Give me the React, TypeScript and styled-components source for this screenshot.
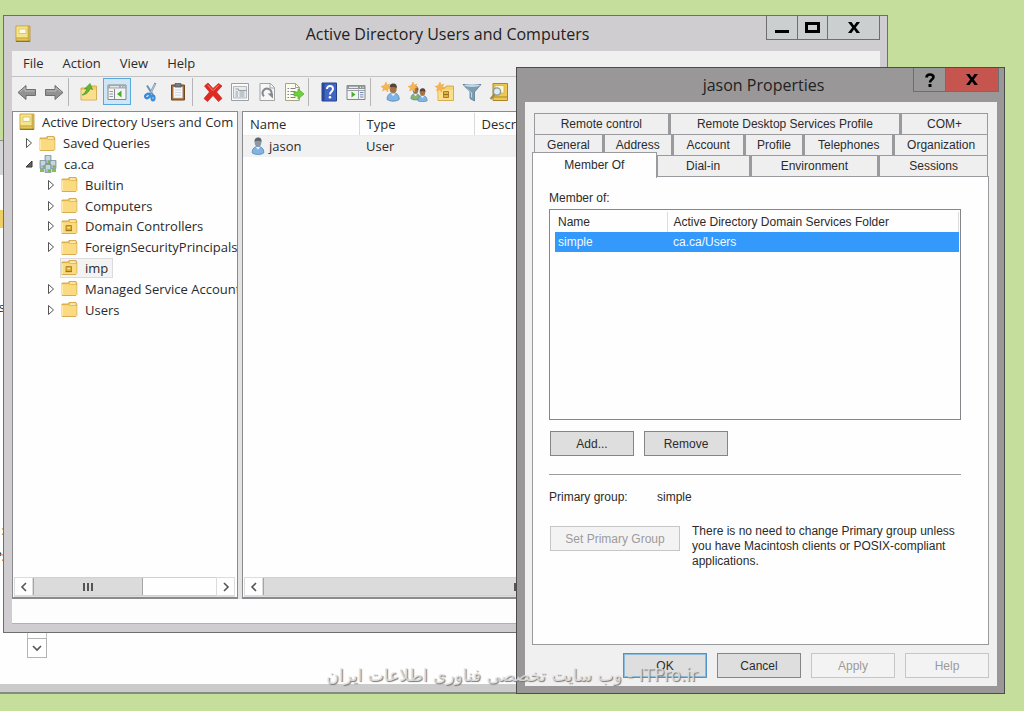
import React from "react";
import styled, { createGlobalStyle, css } from "styled-components";

const UI = `"Open Sans", "Noto Sans", sans-serif`;
const CLASSIC = `"Liberation Sans", Arial, sans-serif`;

const GlobalStyle = createGlobalStyle`
  *, *::before, *::after { box-sizing: border-box; }
  body { margin: 0; font-family: ${UI}; font-size: 13px; color: #2b2b2b; }
  button, input { font: inherit; color: inherit; }
  button { margin: 0; padding: 0; border: 0; background: none; }
  ul { margin: 0; padding: 0; list-style: none; }
  svg { display: block; flex: none; }
`;

const Desktop = styled.div`
  position: relative;
  height: 100vh;
  min-height: 640px;
  overflow: hidden;
  background: #c5de9b;
`;

/* ---------- window behind ---------- */

const BackWindow = styled.section`
  position: absolute;
  top: 140px;
  left: 0;
  right: 136px;
  bottom: 17px;
  display: flex;
  flex-direction: column;
  background: #fefefe;
  border-top: 1px solid #8c8c8c;
  border-bottom: 2px solid #848b80;
`;

const BackHeader = styled.div`
  height: 34px;
  background: #d5d5d5;
`;

const BackBody = styled.div`
  flex: 1;
  min-height: 0;
  display: flex;
  gap: 22px;
`;

const BackLabels = styled.div`
  width: 5px;
  display: flex;
  flex-direction: column;
  align-items: flex-end;
  padding-top: 35px;
  line-height: 20px;
`;

const BackFolder = styled.span`
  width: 5px;
  height: 18px;
  margin-bottom: 69px;
  background: #f0cf62;
`;

const BackLabel = styled.span<{ $after?: number }>`
  margin-bottom: ${(p) => p.$after ?? 0}px;
`;

const BackScroll = styled.div`
  display: flex;
  flex-direction: column;
  justify-content: flex-end;
  padding-bottom: 26px;
`;

const BackFooter = styled.div`
  height: 8px;
  background: #cccbcc;
`;

const ScrollDown = styled.button`
  display: grid;
  place-items: center;
  width: 20px;
  height: 20px;
  border: 1px solid #b4b4b4;
  background: #fff;
  color: #555;
`;

const ScrollTrack = styled.div`
  width: 20px;
  height: 40px;
  border: 1px solid #c4c4c4;
  border-bottom: 0;
`;

/* ---------- window chrome ---------- */

const MainWindow = styled.section`
  position: absolute;
  top: 15px;
  left: 3px;
  right: 136px;
  bottom: 78px;
  display: flex;
  flex-direction: column;
  padding: 0 7px 8px 8px;
  border: 1px solid #6e6e6e;
  background: #cfcdcf;
`;

const DialogWindow = styled.section`
  position: absolute;
  top: 67px;
  left: 516px;
  right: 19px;
  bottom: 17px;
  display: flex;
  flex-direction: column;
  padding: 0 5px 7px 8px;
  border: 1px solid #4c4c4c;
  background: #999798;
`;

const TitleBar = styled.header<{ $height: number }>`
  flex: none;
  display: grid;
  grid-template-columns: 1fr auto 1fr;
  align-items: center;
  height: ${(p) => p.$height}px;
  padding-left: 3px;
`;

const Title = styled.h1`
  margin: 0;
  font-size: 16px;
  font-weight: 400;
  line-height: 24px;
  color: #222;
`;

const Caption = styled.div`
  align-self: start;
  justify-self: end;
  display: flex;
  border: 1px solid #6e6e6e;
  border-top: 0;
`;

const CaptionButton = styled.button<{ $width: number; $tone?: "light" | "grey" | "red" }>`
  display: grid;
  place-items: center;
  width: ${(p) => p.$width}px;
  height: 23px;
  background: ${(p) => (p.$tone === "red" ? "#c65550" : p.$tone === "grey" ? "#989898" : "#cbcfd0")};
  & + & { border-left: 1px solid #6e6e6e; }
`;

/* ---------- main window ---------- */

const MenuBar = styled.nav`
  flex: none;
  display: flex;
  gap: 19px;
  height: 26px;
  padding: 0 11px;
  background: #f1f0f1;
  border-bottom: 1px solid #c2c2c2;
`;

const MenuItem = styled.button`
  height: 23px;
  line-height: 22px;
`;

const Toolbar = styled.div`
  flex: none;
  display: flex;
  gap: 1px;
  height: 34px;
  padding: 1px 2px 5px;
  background: #f1f0f1;
`;

const ToolButton = styled.button<{ $active?: boolean }>`
  display: grid;
  place-items: center;
  flex: none;
  width: 26px;
  height: 27px;
  ${(p) => p.$active && css`
    width: 28px;
    border: 1px solid #5aa7dc;
    background: #cfe6f6;
  `}
`;

const ToolDivider = styled.span<{ $blank?: boolean }>`
  flex: none;
  width: ${(p) => (p.$blank ? 5 : 7)}px;
  border-left: 1px solid ${(p) => (p.$blank ? "transparent" : "#b5b5b5")};
`;

const Panes = styled.div`
  flex: 1;
  min-height: 0;
  display: grid;
  grid-template-columns: 226px minmax(0, 1fr);
  gap: 4px;
  background: #e4e3e4;
`;

const Pane = styled.div`
  min-width: 0;
  display: flex;
  flex-direction: column;
  justify-content: space-between;
  overflow: hidden;
  border: 1px solid #8b8b8f;
  border-bottom-width: 2px;
  background: #fefefe;
`;

const StatusBar = styled.footer`
  flex: none;
  height: 25px;
  background: #fdfdfd;
  border-bottom: 1px solid #b0b0b0;
`;

const Tree = styled.ul`
  display: grid;
  grid-template-rows: repeat(10, 1fr);
  height: 208px;
`;

const TreeRow = styled.li<{ $level: number }>`
  display: flex;
  align-items: center;
  min-width: 0;
  padding-left: ${(p) => [0, 8, 30][p.$level]}px;
  white-space: nowrap;
`;

const Expander = styled.button`
  display: grid;
  place-items: center;
  flex: none;
  width: 15px;
  height: 16px;
  margin-right: 2px;
`;

const TreeLabel = styled.button<{ $root?: boolean; $selected?: boolean }>`
  display: flex;
  align-items: center;
  gap: 7px;
  height: 20px;
  padding: 0 4px 0 ${(p) => (p.$root ? 5 : 0)}px;
  line-height: 20px;
  border: 1px solid transparent;
  ${(p) => p.$selected && css`
    border-color: #dcdcdc;
    background: #f3f3f3;
  `}
`;

const ScrollBar = styled.div`
  flex: none;
  display: flex;
  height: 20px;
  margin: 0 2px 0 1px;
  border-bottom: 1px solid #dedede;
`;

const ScrollArrow = styled.button`
  display: grid;
  place-items: center;
  flex: none;
  width: 19px;
  border: 1px solid #dcdcdc;
  color: #555;
`;

const ScrollLane = styled.div`
  flex: 1;
  border: 1px solid #d0d0d0;
  border-width: 1px 0;
`;

const ScrollThumb = styled.div<{ $share: number }>`
  display: grid;
  place-items: center;
  width: ${(p) => p.$share}%;
  height: 100%;
  background: #dbdbdc;
  border: 1px solid #a5a5a5;
  border-width: 0 1px;
`;

const ObjectList = styled.table`
  width: 100%;
  margin-top: 1px;
  border-collapse: collapse;
  table-layout: fixed;
  th, td {
    height: 22px;
    padding: 0 0 0 7px;
    font-weight: 400;
    text-align: left;
    line-height: 20px;
    white-space: nowrap;
  }
  th { border-right: 1px solid #d9d9d9; border-bottom: 1px solid #ececec; }
  td { background: #f2f1f2; }
  th:first-child { width: 116px; }
  th:nth-child(2) { width: 115px; }
`;

const NameCell = styled.span`
  display: flex;
  align-items: center;
  gap: 3px;
`;

/* ---------- dialog ---------- */

const DialogBody = styled.div`
  flex: 1;
  min-height: 0;
  display: flex;
  flex-direction: column;
  margin-right: 2px;
  padding: 11px 8px 8px 7px;
  background: #f1f0f1;
  font-family: ${CLASSIC};
  font-size: 12px;
`;

const TabRows = styled.div`
  position: relative;
  z-index: 1;
  flex: none;
  padding: 0 1px 0 2px;
`;

const TabRow = styled.div<{ $cols: string }>`
  display: grid;
  grid-template-columns: ${(p) => p.$cols};
  height: 21px;
`;

const Tab = styled.button<{ $selected?: boolean }>`
  border: 1px solid #9a9a9e;
  border-right-width: 2px;
  border-bottom: 0;
  background: #f0eff0;
  line-height: 19px;
  &:last-child { border-right-width: 1px; }
  ${(p) => p.$selected && css`
    z-index: 1;
    margin: -3px 0 -2px -2px;
    border-right-width: 1px;
    background: #fefefe;
  `}
`;

const TabPanel = styled.div`
  flex: 1;
  min-height: 0;
  padding: 13px 27px 0 16px;
  border: 1px solid #9a9a9e;
  background: #fefefe;
`;

const FieldLabel = styled.div`
  line-height: 16px;
`;

const GroupBox = styled.div`
  height: 211px;
  margin: 3px 0 0;
  padding: 2px 1px 0 5px;
  border: 1px solid #85858a;
`;

const GroupTable = styled.table`
  width: 100%;
  border-collapse: collapse;
  table-layout: fixed;
  th, td {
    height: 20px;
    padding: 0 0 0 3px;
    font-weight: 400;
    text-align: left;
    line-height: 18px;
  }
  th + th, td + td { padding-left: 6px; }
  th { border-right: 1px solid #dcdcdc; }
  th:first-child { width: 112px; }
  td { background: #3399fb; color: #f2f8ff; }
`;

const ButtonRow = styled.div<{ $end?: boolean }>`
  flex: none;
  display: flex;
  gap: 10px;
  margin-top: ${(p) => (p.$end ? 8 : 11)}px;
  justify-content: ${(p) => (p.$end ? "flex-end" : "flex-start")};
  ${(p) => !p.$end && css`padding-left: 1px;`}
`;

const PushButton = styled.button<{ $primary?: boolean; $wide?: boolean }>`
  flex: none;
  width: ${(p) => (p.$wide ? 130 : 84)}px;
  height: 25px;
  border: 1px solid ${(p) => (p.$primary ? "#4f93c8" : "#858585")};
  background: #dfdedf;
  line-height: 22px;
  ${(p) => p.$primary && css`box-shadow: inset 0 0 0 1px #8ebbd9;`}
  &:disabled {
    border-color: #c6c6c6;
    background: #f4f3f4;
    color: #9b9b9b;
  }
`;

const Rule = styled.hr`
  margin: 18px 0 13px;
  border: 0;
  border-top: 1px solid #9c9c9c;
`;

const Primary = styled.dl`
  display: grid;
  grid-template-columns: 108px 1fr;
  margin: 0;
  line-height: 18px;
  dd { margin: 0; }
`;

const PrimaryHint = styled.div`
  display: flex;
  gap: 12px;
  margin-top: 18px;
  padding-left: 1px;
  p { margin: 0; line-height: 15px; }
  ${PushButton} { margin-top: 2px; }
`;

const Watermark = styled.p`
  position: absolute;
  left: 0;
  right: 0;
  bottom: 24px;
  margin: 0;
  text-align: center;
  font-family: "DejaVu Sans", sans-serif;
  font-size: 17px;
  line-height: 24px;
  color: rgba(225, 225, 225, 0.85);
  text-shadow: 1px 1px 1px #777;
  pointer-events: none;
`;

/* ---------- drawings ---------- */

const Chevron = ({ d }: { d: string }) => (
  <svg width="10" height="10" viewBox="0 0 10 10" fill="none" stroke="currentColor" strokeWidth="1.6"><path d={d} /></svg>
);
const LEFT = "M7 1 3 5l4 4";
const RIGHT = "M3 1l4 4-4 4";
const DOWN = "M1 3l4 4 4-4";

const Grip = () => (
  <svg width="10" height="8" viewBox="0 0 10 8" fill="#555"><path d="M0 0h2v8H0zM4 0h2v8H4zM8 0h2v8H8z" /></svg>
);

const ConsoleIcon = () => (
  <svg width="16" height="18" viewBox="0 0 16 18">
    <path d="M1 1h14v15.5H1z" fill="#e3c653" stroke="#b8963a" strokeWidth=".8" />
    <path d="M1.500 1.500h11v11h-11z" fill="#f4e48f" />
    <path d="M4 4h7v4.500H4z" fill="#fffdea" stroke="#d8bd5c" strokeWidth=".8" />
    <path d="M1 13h14" stroke="#c9a83f" />
    <path d="M13.500 2v14" stroke="#cdae45" strokeWidth="1.4" />
    <path d="M1 16.300h14" stroke="#8c701e" strokeWidth="1.2" />
  </svg>
);

const FolderIcon = ({ ou }: { ou?: boolean }) => (
  <svg width="17" height="17" viewBox="0 0 17 17">
    <path d="M1 3h6l1-1.5h7l.8 1.5v11.5l-1 1H1z" fill="#e9bd55" stroke="#cf9f3d" strokeWidth=".8" />
    <path d="M9 2.3h5.6v1.5H9z" fill="#fff3c4" />
    <path d="M1 4.2h7L9 5h6.5v10H1z" fill="#fadb82" />
    <path d="M1.2 4.5v10.5" stroke="#fff0b8" />
    {ou && <g><path d="M5 7.500h5.500v5H5z" fill="#dcae38" stroke="#a37c1c" strokeWidth=".8" /><path d="M6.500 9h2.500v1.200H6.500z" fill="#ffeaa0" /><path d="M4.500 12.700h6.500" stroke="#8f6a14" strokeWidth=".8" /></g>}
  </svg>
);

const DomainIcon = () => (
  <svg width="18" height="18" viewBox="0 0 18 18">
    <path d="M9 4v5M4 9h10" stroke="#8aa0a8" />
    {[[6, 0], [1, 5], [11, 5], [6, 9]].map(([x, y]) => (
      <g key={`${x}-${y}`}>
        <path d={`M${x} ${y + 0.5}h6v8h-6z`} fill="#a9bec6" stroke="#748a94" strokeWidth=".7" />
        <path d={`M${x + 1} ${y + 2}h4M${x + 1} ${y + 4}h4`} stroke="#e3eef1" />
        <path d={`M${x + 3} ${y + 5.6}h2.5v2h-2.5z`} fill="#74b63c" />
      </g>
    ))}
    <path d="M1 14h4v3H1zM13 14h4v3h-4z" fill="#86bf58" />
  </svg>
);

const Person = ({ x = 0, y = 0, s = 1, body = "#7fb4e3", head = "#a3744a", hair = "#5a4535" }) => (
  <g transform={`translate(${x} ${y}) scale(${s})`}>
    <path d="M1 15c0-4 2-6 5.5-6S12 11 12 15c-3 2-8 2-11 0z" fill={body} stroke="#4b7fb2" strokeWidth=".7" />
    <path d="M4.500 9.500 6.500 12l2-2.500z" fill="#e9f2fb" />
    <ellipse cx="6.500" cy="5" rx="3.200" ry="4.200" fill={head} />
    <path d="M3.200 4.500C3 1.500 5 .3 6.700.4 9 .5 10.200 2 9.800 4.600 8 3.500 5 3.200 3.200 4.500z" fill={hair} />
  </g>
);

const Spark = () => (
  <path d="M5 0l1 3 3-1-1.500 2.500L10 6 7 6.500 6.500 10 4.500 7.500 1.500 9l1-3L0 4.500 3.200 3.500z" fill="#f7b550" stroke="#e89a35" strokeWidth=".4" />
);

const T = ({ children }: { children: React.ReactNode }) => (
  <svg width="20" height="20" viewBox="0 0 20 20">{children}</svg>
);

const ArrowShape = ({ flip }: { flip?: boolean }) => (
  <T>
    <g transform={flip ? "matrix(-1 0 0 1 20 0)" : undefined}>
      <path d="M1 10.500 9 3.500v4h9.500v6H9v4z" fill="#929292" stroke="#6f6f6f" />
      <path d="M3 10 8 5.800V9h9.500" stroke="#bcbcbc" fill="none" />
    </g>
  </T>
);

const icons = {
  up: (
    <T>
      <path d="M2 6h7l1-2h7.500v14H2z" fill="#f3cf6d" stroke="#cf9f3d" strokeWidth=".8" />
      <path d="M2.500 8h14.500v9.500H2.500z" fill="#fbdf8d" />
      <path d="M3 13c2-1 4-3.500 5-6.500L5.500 7 11 1.500l2.500 6-2.300-1C10 10 7 13 3 13z" fill="#62b832" stroke="#3f8d1b" strokeWidth=".6" />
    </T>
  ),
  tree: (
    <T>
      <path d="M1 3h18v14.500H1z" fill="#f4f4f4" stroke="#84888c" />
      <path d="M1 3h18v3.500H1z" fill="#a2a9ae" />
      <path d="M3 4.800h9M14 4.800h1M16.500 4.800h1" stroke="#fff" />
      <path d="M7.500 7v10" stroke="#84888c" />
      <path d="M2.500 9.500h3.500M2.500 12h3.500M2.500 14.500h3.500" stroke="#9098a0" />
      <path d="M14.500 8.500v7L10 12z" fill="#47ad2b" />
    </T>
  ),
  cut: (
    <T>
      <path d="M14.500 1 8.500 13M6 3.500 12.500 14" stroke="#6d90b0" strokeWidth="2" />
      <path d="M14 2 9.500 11" stroke="#d7e6f2" strokeWidth=".7" />
      <ellipse cx="6.500" cy="14" rx="2.600" ry="1.800" fill="none" stroke="#3b8bdb" strokeWidth="2.200" transform="rotate(-35 6.500 14)" />
      <ellipse cx="12" cy="16" rx="1.500" ry="2.300" fill="none" stroke="#3b8bdb" strokeWidth="2.200" />
    </T>
  ),
  paste: (
    <T>
      <path d="M3.500 3h13v15h-13z" fill="#a66f3c" stroke="#744719" />
      <path d="M5.500 5h9v11h-9z" fill="#f6f8fa" stroke="#c0c4c8" strokeWidth=".6" />
      <path d="M7 1.500h6v3.500H7z" fill="#777d84" stroke="#4d5257" strokeWidth=".7" />
      <path d="M7 8h6M7 10.500h6M7 13h6" stroke="#c5ccd3" strokeWidth=".8" />
    </T>
  ),
  remove: <T><path d="M1.500 4 5 1l5 5.500L15.500 1.500 19 4l-5.500 6L19 16.500 15.500 19.500 10 13.500 4.500 19.500 1 16.500 6.500 10z" fill="#dd2b23" stroke="#c4231d" strokeWidth=".7" /><path d="M4.500 2.800 10 8.700l5.500-5.500" stroke="#f58a80" fill="none" /></T>,
  props: (
    <T>
      <path d="M1.500 1.500h17v17h-17z" fill="#fafafa" stroke="#9ba1a7" />
      <path d="M3.500 4.500h13v11.500h-13z" fill="#e9ecef" stroke="#a2a8ae" strokeWidth=".8" />
      <path d="M5.500 7h3v1.500h8M5.500 10h2.500M9.500 10h5M5.500 12h2.500M9.500 12h5M5.500 14h2.500M9.500 14h5" stroke="#999fa6" fill="none" />
    </T>
  ),
  refresh: (
    <T>
      <path d="M3 1.500h10.500l4 4v13H3z" fill="#f7f7f7" stroke="#a3a3a3" />
      <path d="M13 1.500v4.500h4.500" fill="none" stroke="#a3a3a3" />
      <path d="M7 14.200A4.400 4.400 0 1 1 14.200 12.500" fill="none" stroke="#85898d" strokeWidth="2" />
      <path d="M10.500 11.500h5.500v5z" fill="#85898d" />
    </T>
  ),
  exportList: (
    <T>
      <path d="M1.500 1.500h10l4 4v13h-14z" fill="#fdfbe9" stroke="#a7a48e" />
      <path d="M11.500 1.500v4h4" fill="none" stroke="#a7a48e" />
      <path d="M3.500 6.500h1.500M3.500 9.500h1.500M3.500 12.500h1.500M3.500 15.500h1.500M6.500 6.500h5M6.500 9.500h5M6.500 12.500h5M6.500 15.500h5" stroke="#7f8594" />
      <path d="M10 10h4V6.800l6 5.200-6 5.200V14h-4z" fill="#6fd03f" stroke="#4fae2b" strokeWidth=".7" />
    </T>
  ),
  help: (
    <T>
      <path d="M3 1h14.500v18H3z" fill="#3f66c4" stroke="#26418c" />
      <path d="M3 1h2.500v18H3z" fill="#294796" />
      <path d="M8 7c0-4 6-4 6 0 0 2.500-3 2.500-3 5.500" fill="none" stroke="#fff" strokeWidth="1.900" />
      <circle cx="11" cy="15.300" r="1.300" fill="#fff" />
    </T>
  ),
  pane: (
    <T>
      <path d="M1 3.500h18v14H1z" fill="#f4f4f4" stroke="#84888c" />
      <path d="M1 3.500h18v3.500H1z" fill="#8f979c" />
      <path d="M3 5.300h9M14 5.300h1M16.500 5.300h1" stroke="#fff" />
      <path d="M12.500 7.500v10M1 8.500h18" stroke="#9aa0a6" />
      <path d="M14 10.500h3.500M14 12.800h3.500M14 15h3.500" stroke="#6f86b8" />
      <path d="M5.500 9.500v6L9.500 12.500z" fill="#47ad2b" />
    </T>
  ),
  user: <T><Person x={5} y={1} s={1.1} /><Spark /></T>,
  group: <T><Person x={2} y={4} s={0.85} body="#86b56b" /><Person x={9} y={6} s={0.85} /><Spark /></T>,
  ou: (
    <T>
      <path d="M3 6h7l1-2h7.500v14.500H3z" fill="#f5d272" stroke="#cf9f3d" strokeWidth=".8" />
      <path d="M3.500 8h14.500v10H3.500z" fill="#fbdf8d" />
      <path d="M8.500 9.500h5v6h-5z" fill="#e0b13d" stroke="#94701b" strokeWidth=".8" />
      <path d="M8.500 12.500h5" stroke="#94701b" />
      <Spark />
    </T>
  ),
  filter: <T><path d="M1 2.500h18L12.500 10v9L8 16.500V10z" fill="#7d9db3" stroke="#5b7b92" strokeWidth=".8" /><ellipse cx="10" cy="3.500" rx="8" ry="1.500" fill="#c3d5e0" /><path d="M5 6.500 9.500 11v4.500" stroke="#c6d8e3" fill="none" /></T>,
  find: (
    <T>
      <path d="M4 1.500h14.500v17H4z" fill="#ecc957" stroke="#ab8627" />
      <path d="M6 3.500h9v7.500H6z" fill="#fdf6d3" stroke="#cda93f" strokeWidth=".7" />
      <path d="M4 15h14.500" stroke="#ab8627" />
      <circle cx="8" cy="9.500" r="3.600" fill="#dfeaf0" stroke="#8697a2" strokeWidth="1.300" />
      <path d="M5.500 12.500 1.500 17" stroke="#9b8b57" strokeWidth="2" />
    </T>
  ),
};

/* ---------- content ---------- */

type ToolName = keyof typeof icons;

const tools: Array<{ label: string; icon: ToolName; active?: boolean } | "line" | "blank"> = [
  { label: "Up one level", icon: "up" },
  { label: "Show console tree", icon: "tree", active: true },
  "blank",
  { label: "Cut", icon: "cut" },
  { label: "Paste", icon: "paste" },
  "line",
  { label: "Delete", icon: "remove" },
  { label: "Properties", icon: "props" },
  { label: "Refresh", icon: "refresh" },
  { label: "Export list", icon: "exportList" },
  "line",
  { label: "Help", icon: "help" },
  { label: "Show action pane", icon: "pane" },
  "line",
  { label: "New user", icon: "user" },
  { label: "New group", icon: "group" },
  { label: "New organizational unit", icon: "ou" },
  { label: "Filter", icon: "filter" },
  { label: "Find", icon: "find" },
];

type Node = { name: string; level: number; kind: "console" | "folder" | "domain" | "ou"; state?: "open" | "closed"; selected?: boolean };

const nodes: Node[] = [
  { name: "Active Directory Users and Com", level: 0, kind: "console" },
  { name: "Saved Queries", level: 1, kind: "folder", state: "closed" },
  { name: "ca.ca", level: 1, kind: "domain", state: "open" },
  { name: "Builtin", level: 2, kind: "folder", state: "closed" },
  { name: "Computers", level: 2, kind: "folder", state: "closed" },
  { name: "Domain Controllers", level: 2, kind: "ou", state: "closed" },
  { name: "ForeignSecurityPrincipals", level: 2, kind: "folder", state: "closed" },
  { name: "imp", level: 2, kind: "ou", selected: true },
  { name: "Managed Service Accounts", level: 2, kind: "folder", state: "closed" },
  { name: "Users", level: 2, kind: "folder", state: "closed" },
];

const tabRows = [
  { cols: "136fr 232fr 87fr", tabs: ["Remote control", "Remote Desktop Services Profile", "COM+"] },
  { cols: "70fr 69fr 72fr 60fr 90fr 94fr", tabs: ["General", "Address", "Account", "Profile", "Telephones", "Organization"] },
  { cols: "123fr 94fr 129fr 109fr", tabs: ["Member Of", "Dial-in", "Environment", "Sessions"] },
];

const NodeIcon = ({ kind }: { kind: Node["kind"] }) =>
  kind === "console" ? <ConsoleIcon /> : kind === "domain" ? <DomainIcon /> : <FolderIcon ou={kind === "ou"} />;

const HScroll = ({ share }: { share: number }) => (
  <ScrollBar>
    <ScrollArrow aria-label="Scroll left"><Chevron d={LEFT} /></ScrollArrow>
    <ScrollLane><ScrollThumb $share={share}><Grip /></ScrollThumb></ScrollLane>
    <ScrollArrow aria-label="Scroll right"><Chevron d={RIGHT} /></ScrollArrow>
  </ScrollBar>
);

const CloseGlyph = () => (
  <svg width="12" height="11" viewBox="0 0 12 11"><path d="M0 0h3.500L6 3.500 8.500 0H12L7.800 5.500 12 11H8.500L6 7.500 3.500 11H0l4.200-5.500z" fill="#000" /></svg>
);

export default function App() {
  return (
    <>
      <GlobalStyle />
      <Desktop>
        <BackWindow aria-label="Background window">
          <BackHeader />
          <BackBody>
            <BackLabels>
              <BackFolder />
              <BackLabel $after={203}>s</BackLabel>
              <BackLabel $after={6}>:</BackLabel>
              <BackLabel>?:</BackLabel>
            </BackLabels>
            <BackScroll>
              <ScrollTrack />
              <ScrollDown aria-label="Scroll down"><Chevron d={DOWN} /></ScrollDown>
            </BackScroll>
          </BackBody>
          <BackFooter />
        </BackWindow>

        <MainWindow aria-label="Active Directory Users and Computers">
          <TitleBar $height={35}>
            <ConsoleIcon />
            <Title>Active Directory Users and Computers</Title>
            <Caption>
              <CaptionButton $width={30} aria-label="Minimize"><svg width="14" height="11" viewBox="0 0 14 11"><path d="M0 8h14v3H0z" /></svg></CaptionButton>
              <CaptionButton $width={30} aria-label="Maximize"><svg width="15" height="11" viewBox="0 0 15 11"><path d="M1.500 1.500h12v8h-12z" fill="none" stroke="#000" strokeWidth="3" /></svg></CaptionButton>
              <CaptionButton $width={52} aria-label="Close"><CloseGlyph /></CaptionButton>
            </Caption>
          </TitleBar>
          <MenuBar>
            {["File", "Action", "View", "Help"].map((m) => <MenuItem key={m}>{m}</MenuItem>)}
          </MenuBar>
          <Toolbar role="toolbar">
            <ToolButton aria-label="Back"><ArrowShape /></ToolButton>
            <ToolButton aria-label="Forward"><ArrowShape flip /></ToolButton>
            <ToolDivider />
            {tools.map((t, i) =>
              typeof t === "string"
                ? <ToolDivider key={i} $blank={t === "blank"} />
                : <ToolButton key={t.label} aria-label={t.label} $active={t.active}>{icons[t.icon]}</ToolButton>
            )}
          </Toolbar>
          <Panes>
            <Pane>
              <Tree>
                {nodes.map((n) => (
                  <TreeRow key={n.name} $level={n.level}>
                    {n.level > 0 && (
                      <Expander aria-label={n.state ? `Toggle ${n.name}` : undefined} disabled={!n.state}>
                        {n.state === "closed" && <svg width="8" height="12" viewBox="0 0 8 12"><path d="M1.500 1.500v9L6.500 6z" fill="#fff" stroke="#555" /></svg>}
                        {n.state === "open" && <svg width="8" height="8" viewBox="0 0 8 8"><path d="M7 1v6H1z" fill="#666" stroke="#333" /></svg>}
                      </Expander>
                    )}
                    <TreeLabel $root={n.level === 0} $selected={n.selected}><NodeIcon kind={n.kind} />{n.name}</TreeLabel>
                  </TreeRow>
                ))}
              </Tree>
              <HScroll share={60} />
            </Pane>
            <Pane>
              <ObjectList>
                <thead><tr><th>Name</th><th>Type</th><th>Description</th></tr></thead>
                <tbody>
                  <tr>
                    <td><NameCell><svg width="16" height="18" viewBox="0 0 15 17"><Person x={1} y={0} head="#8d979f" hair="#5d666e" /></svg>jason</NameCell></td>
                    <td>User</td>
                    <td />
                  </tr>
                </tbody>
              </ObjectList>
              <HScroll share={86} />
            </Pane>
          </Panes>
          <StatusBar />
        </MainWindow>

        <DialogWindow role="dialog" aria-label="jason Properties">
          <TitleBar $height={34}>
            <span />
            <Title>jason Properties</Title>
            <Caption>
              <CaptionButton $width={31} $tone="grey" aria-label="Help">
                <svg width="10" height="14" viewBox="0 0 10 14"><path d="M1.500 4.500C1.500.5 8.500.5 8.500 4c0 2.500-3.500 2.500-3.500 5.500" fill="none" stroke="#000" strokeWidth="2.600" /><path d="M3.500 11h3v3h-3z" /></svg>
              </CaptionButton>
              <CaptionButton $width={53} $tone="red" aria-label="Close"><CloseGlyph /></CaptionButton>
            </Caption>
          </TitleBar>
          <DialogBody>
            <TabRows role="tablist">
              {tabRows.map((r) => (
                <TabRow key={r.cols} $cols={r.cols}>
                  {r.tabs.map((t) => <Tab key={t} role="tab" aria-selected={t === "Member Of"} $selected={t === "Member Of"}>{t}</Tab>)}
                </TabRow>
              ))}
            </TabRows>
            <TabPanel role="tabpanel">
              <FieldLabel id="member-of">Member of:</FieldLabel>
              <GroupBox>
                <GroupTable aria-labelledby="member-of">
                  <thead><tr><th>Name</th><th>Active Directory Domain Services Folder</th></tr></thead>
                  <tbody><tr><td>simple</td><td>ca.ca/Users</td></tr></tbody>
                </GroupTable>
              </GroupBox>
              <ButtonRow>
                <PushButton>Add...</PushButton>
                <PushButton>Remove</PushButton>
              </ButtonRow>
              <Rule />
              <Primary><dt>Primary group:</dt><dd>simple</dd></Primary>
              <PrimaryHint>
                <PushButton $wide disabled>Set Primary Group</PushButton>
                <p>There is no need to change Primary group unless you have Macintosh clients or POSIX-compliant applications.</p>
              </PrimaryHint>
            </TabPanel>
            <ButtonRow $end>
              <PushButton $primary>OK</PushButton>
              <PushButton>Cancel</PushButton>
              <PushButton disabled>Apply</PushButton>
              <PushButton disabled>Help</PushButton>
            </ButtonRow>
          </DialogBody>
        </DialogWindow>

        <Watermark dir="rtl" lang="fa">ITPro.ir - وب سایت تخصصی فناوری اطلاعات ایران</Watermark>
      </Desktop>
    </>
  );
}
